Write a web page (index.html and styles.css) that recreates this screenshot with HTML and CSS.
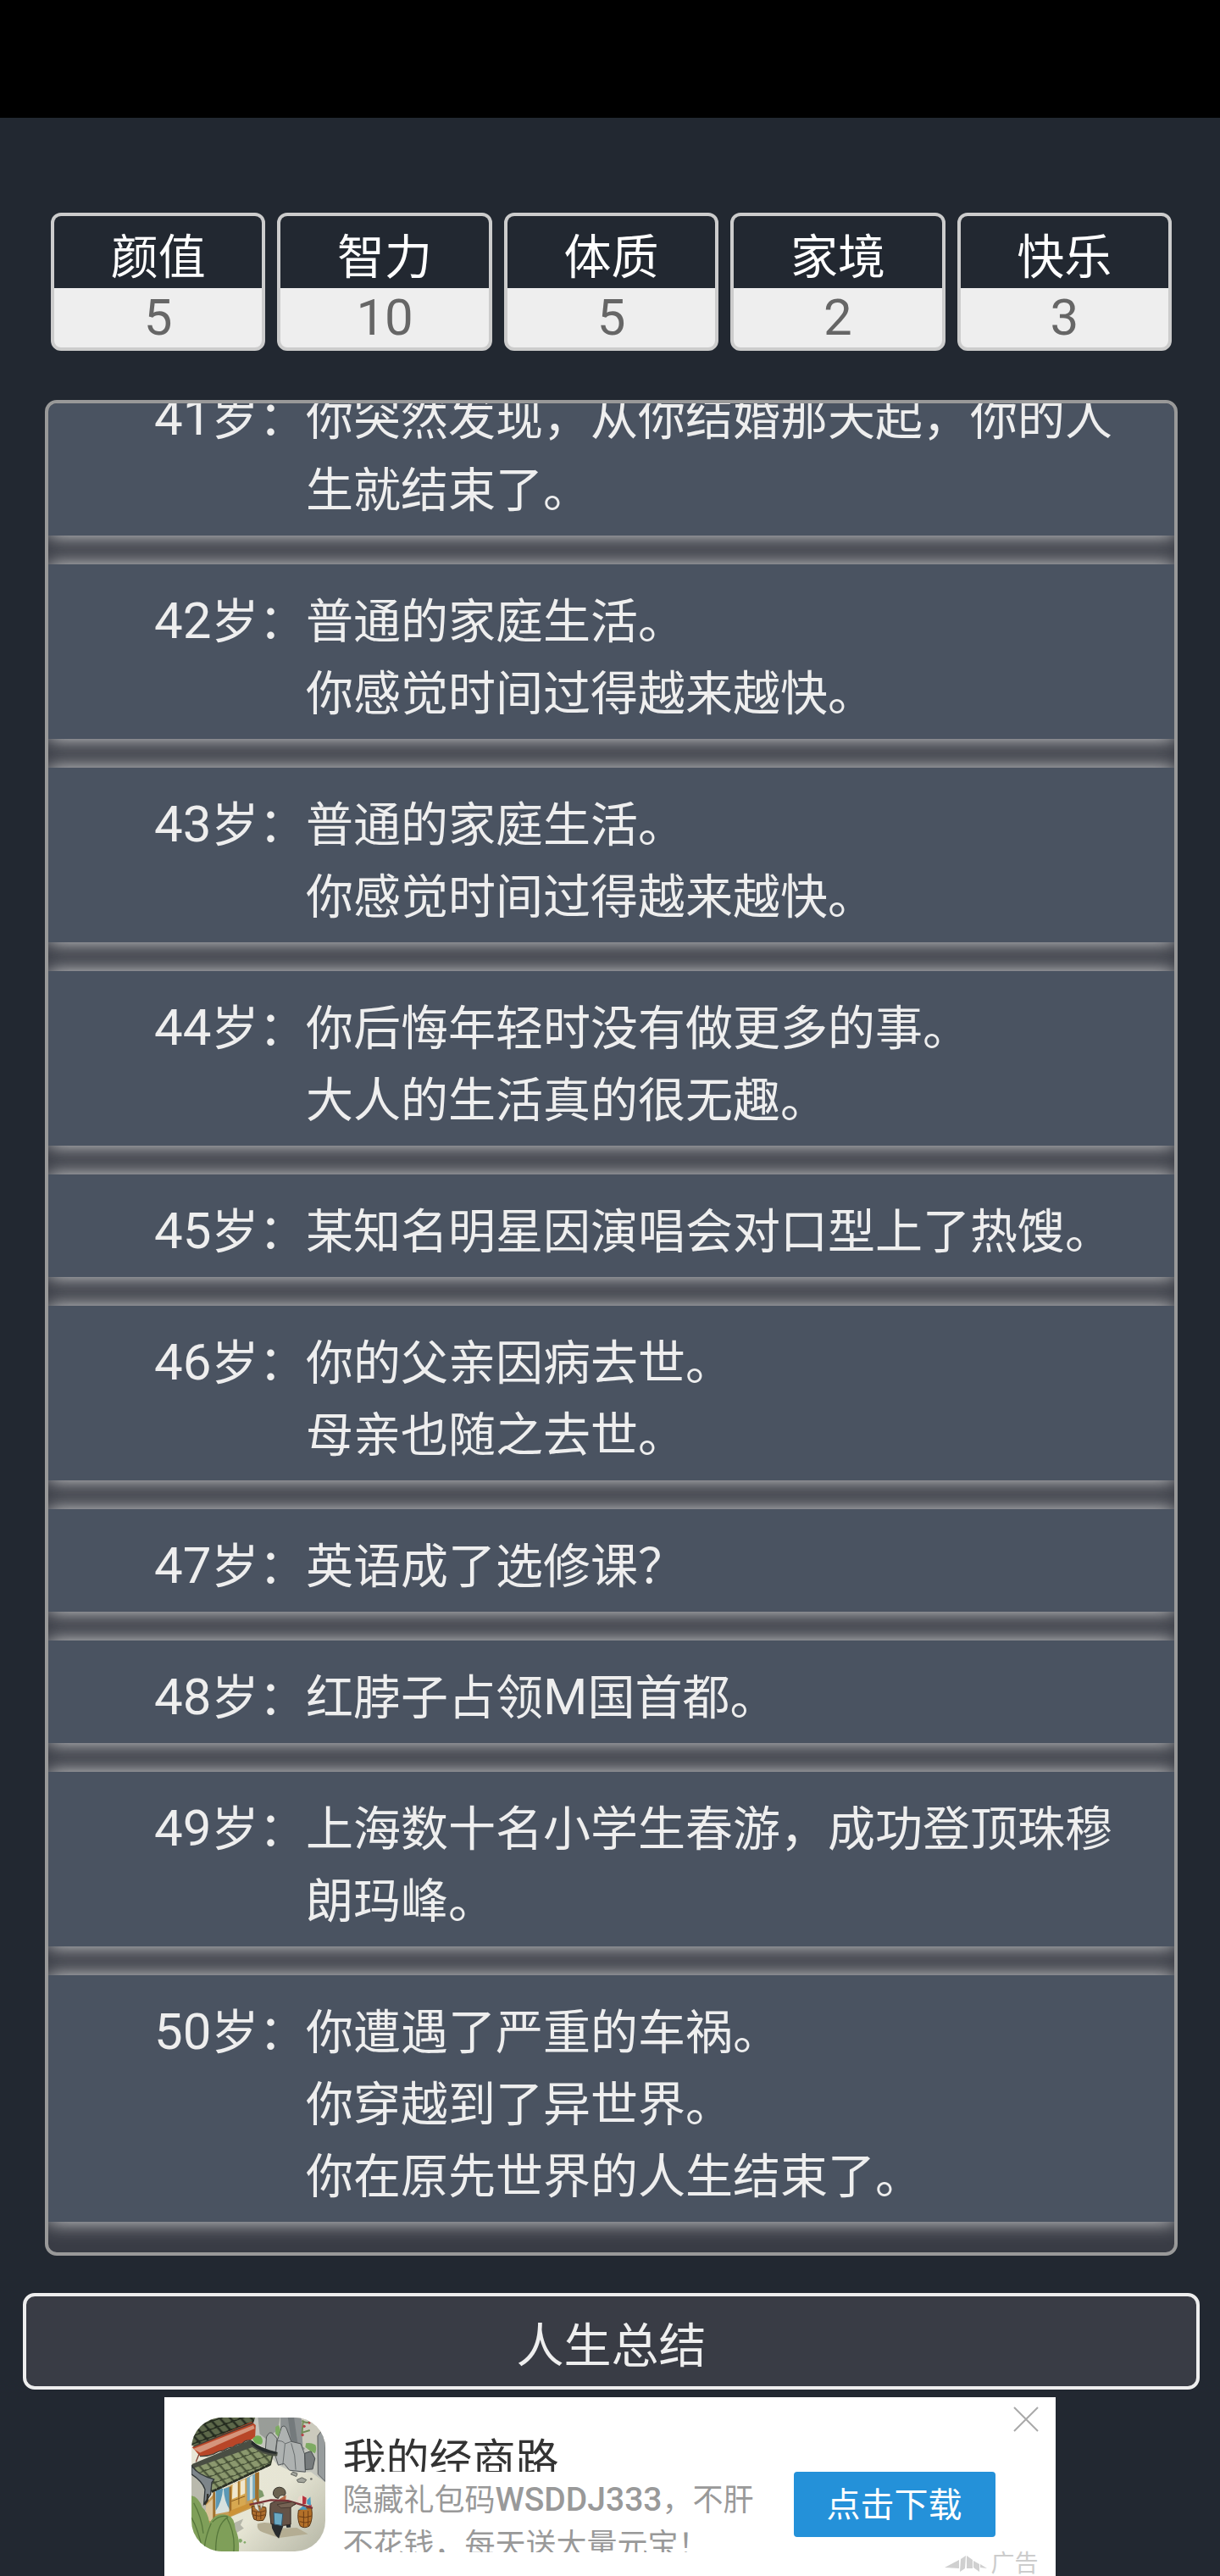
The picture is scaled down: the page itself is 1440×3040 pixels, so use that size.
FILE: index.html
```html
<!DOCTYPE html>
<html lang="zh-CN">
  <head>
    <meta charset="UTF-8" />
    <meta name="viewport" content="width=device-width, initial-scale=1.0" />
    <title>人生重开模拟器</title>
    <link rel="stylesheet" href="styles.css">
  </head>
  <body>
    <div class="status-bar"></div>

    <main class="game">
      <ul class="property">
        <li><span class="name">颜值</span><span class="value">5</span></li>
        <li><span class="name">智力</span><span class="value">10</span></li>
        <li><span class="name">体质</span><span class="value">5</span></li>
        <li><span class="name">家境</span><span class="value">2</span></li>
        <li><span class="name">快乐</span><span class="value">3</span></li>
      </ul>

      <ul class="trajectory">
        <li>
          <span class="age"><span class="latin">41</span>岁：</span>
          <p>你突然发现，从你结婚那天起，你的人生就结束了。</p>
        </li>
        <li>
          <span class="age"><span class="latin">42</span>岁：</span>
          <p>普通的家庭生活。<br>你感觉时间过得越来越快。</p>
        </li>
        <li>
          <span class="age"><span class="latin">43</span>岁：</span>
          <p>普通的家庭生活。<br>你感觉时间过得越来越快。</p>
        </li>
        <li>
          <span class="age"><span class="latin">44</span>岁：</span>
          <p>你后悔年轻时没有做更多的事。<br>大人的生活真的很无趣。</p>
        </li>
        <li>
          <span class="age"><span class="latin">45</span>岁：</span>
          <p>某知名明星因演唱会对口型上了热馊。</p>
        </li>
        <li>
          <span class="age"><span class="latin">46</span>岁：</span>
          <p>你的父亲因病去世。<br>母亲也随之去世。</p>
        </li>
        <li>
          <span class="age"><span class="latin">47</span>岁：</span>
          <p>英语成了选修课？</p>
        </li>
        <li>
          <span class="age"><span class="latin">48</span>岁：</span>
          <p>红脖子占领<span class="latin">M</span>国首都。</p>
        </li>
        <li>
          <span class="age"><span class="latin">49</span>岁：</span>
          <p>上海数十名小学生春游，成功登顶珠穆朗玛峰。</p>
        </li>
        <li>
          <span class="age"><span class="latin">50</span>岁：</span>
          <p>你遭遇了严重的车祸。<br>你穿越到了异世界。<br>你在原先世界的人生结束了。</p>
        </li>
      </ul>

      <button type="button" class="summary">人生总结</button>
    </main>

    <!-- 底部广告 -->
    <aside class="ad">
      <svg class="ad-icon" viewBox="76 69 475 475" aria-hidden="true">
        <defs>
          <linearGradient id="ground" x1="0" y1="0" x2="1" y2="1">
            <stop offset="0" stop-color="#e9e7d8" />
            <stop offset="0.6" stop-color="#e6e5d4" />
            <stop offset="1" stop-color="#b4b5a4" />
          </linearGradient>
          <pattern id="tiles" width="30" height="26" patternUnits="userSpaceOnUse" patternTransform="rotate(-20) skewX(22)">
            <rect width="30" height="26" fill="#6f7c55" />
            <path d="M4 0v22q10 7 20 0V0z" fill="#8b986e" />
            <path d="M0 0v21q4 5 8 2q9 6 18 0q3 1 4-2V0" fill="none" stroke="#3c4630" stroke-width="4" />
          </pattern>
          <pattern id="dark-tiles" width="30" height="26" patternUnits="userSpaceOnUse" patternTransform="rotate(-20) skewX(22)">
            <rect width="30" height="26" fill="#3d4632" />
            <path d="M5 0v20q10 6 20 0V0z" fill="#5d684a" />
            <path d="M0 0v21q15 9 30 0V0" fill="none" stroke="#20271c" stroke-width="5" />
          </pattern>
        </defs>
        <rect x="76" y="69" width="475" height="475" fill="url(#ground)" />
        <!-- 山石 -->
        <path d="M290 69H551V300L500 262L440 265L380 235L335 180L300 150z" fill="#c3c5bd" />
        <path d="M312 69h78l-8 44l-42 32l-22-18z" fill="#999d98" />
        <path d="M392 69h74l12 112l-46 22l-40-70z" fill="#8d9293" />
        <path d="M418 69h22l14 100l-20 10z" fill="#747a7c" />
        <path d="M466 69h85v96l-50 28l-30-20z" fill="#cbcabd" />
        <path d="M338 190l4-52q12-26 26-8l12 14l-6 46l-14 12z" fill="#aaaeac" stroke="#4e5151" stroke-width="3" />
        <path d="M374 206l6-54l16-50q12-8 18 8l16 44l34 8l14 38l2 62l-56-6l-20-24l-20 6z" fill="#aeb2b1" stroke="#535758" stroke-width="3" />
        <path d="M380 152q20-2 28 10l22-8M408 162l-8 76M430 160l12 44l4 50" fill="none" stroke="#686d6e" stroke-width="3" />
        <path d="M478 196l22-8l14 26l-8 38l-26 2z" fill="#777c7d" stroke="#44494a" stroke-width="3" />
        <path d="M524 134l12-16l15 8V296l-26-26z" fill="#979c9d" stroke="#55595a" stroke-width="3" />
        <path d="M374 102l12-6l6 18l-8 24l-10-12zM482 160q16-4 34 6q6 16-2 30q-18-8-34-22z" fill="#7eab63" />
        <path d="M292 146q12-20 30-10q10 14 4 26q-20 10-34-16z" fill="#73ae57" />
        <path d="M468 80q18 12 26 4M470 122l26-8M472 82l-4 48" fill="none" stroke="#728d59" stroke-width="6" />
        <circle cx="476" cy="100" r="5" fill="#b8424a" />
        <circle cx="494" cy="88" r="4" fill="#b8424a" />
        <circle cx="470" cy="131" r="5" fill="#b8424a" />
        <path d="M428 270l8-8l16 6l-4 10zM450 290l18-8l16 8l-8 10l-22-2z" fill="#a3a59c" stroke="#62655f" stroke-width="3" />
        <circle cx="501" cy="287" r="4" fill="#6e706a" />
        <!-- 房屋 -->
        <path d="M76 250l76 40l-24 110l-52-10z" fill="#b9b9ad" />
        <path d="M126 372l34-36l154-74v118L204 426l-70 20z" fill="#c69c56" />
        <path d="M128 380l28-28v90l-32-12z" fill="#dbc49a" />
        <path d="M160 330l52-16v88l-50 10z" fill="#d7e1de" />
        <path d="M162 328l26-8q-4 50-26 80zM190 322l22-8v82q-20-30-22-74z" fill="#5b98b5" />
        <path d="M218 308l50-20v92l-54 18z" fill="#d7a851" />
        <path d="M222 306l18-8v52l-20 8zM250 296l16-8v50l-16 8z" fill="#efe7cf" />
        <path d="M272 284l30-16v86l-28 12z" fill="#78a9be" />
        <path d="M283 280l10-6v84l-10 4z" fill="#d4e0dd" />
        <path d="M302 266l14-4v108l-14 6zM210 316l8-2v90l-8 4zM152 334l8-2v100l-8 4z" fill="#9e6e2c" />
        <path d="M214 400l54-22l36-14v14L204 424z" fill="#cc9237" />
        <path d="M244 294v84M218 366l48-18" stroke="#87591f" stroke-width="3" />
        <path d="M314 322l14 8l6 18l-18 8z" fill="#7e9a6a" />
        <!-- 屋顶 -->
        <path d="M76 69h226l-8 24L90 168H76z" fill="url(#dark-tiles)" />
        <path d="M78 174l212-90l14 12l-2 40l-16 14q-20-4-30 12q-18-2-32 12q-20-2-34 12q-20 2-34 12q-22 6-50 8L84 180z" fill="#b84628" />
        <path d="M82 180l214-84l4 12L106 194z" fill="#d5957c" />
        <path d="M82 172l212-84M106 206q26 2 50-8q14-10 34-12q14-10 34-12q14-12 32-12q10-14 30-12" fill="none" stroke="#403e37" stroke-width="4" />
        <path d="M104 196l-12 30" stroke="#7b4233" stroke-width="4" />
        <path d="M78 240l208-86l36 26l42 22l-8 34l-206 96z" fill="url(#tiles)" stroke="#353c2c" stroke-width="5" />
        <path d="M78 234l208-86q28 28 96 44l-2 14q-44 0-88-32L80 250z" fill="#494e43" />
        <path d="M290 150q28 30 90 42l-4 6q-54-2-88-34z" fill="#262c2c" />
        <path d="M76 240q24 34 80 48l-8 12l-4 42l-24 34l4-52q-10-30-48-54z" fill="#7d858a" stroke="#33393a" stroke-width="4" />
        <path d="M148 332l206-96" stroke="#2b3025" stroke-width="8" stroke-dasharray="18 3" />
        <path d="M134 340l-2 24l-10 14" fill="none" stroke="#30302a" stroke-width="7" />
        <!-- 草丛 -->
        <path d="M208 466l22-24l30-14l-10 22l12 12l-26 16z" fill="#b5b6a9" />
        <path d="M76 346q26 4 38 42q20 16 26 56q22-42 66-28q22 6 26 50q16 34 12 78H76z" fill="#7f9f59" />
        <path d="M84 372q28 50 34 108M76 424q24 40 40 120M146 444q-18 40-24 84M206 422q-44 26-44 122M202 426q30 54 24 118M150 440q24-26 54-20" fill="none" stroke="#57773c" stroke-width="4" />
        <circle cx="249" cy="506" r="7" fill="#84aa6b" />
        <circle cx="265" cy="512" r="4" fill="#84aa6b" />
        <!-- 挑夫 -->
        <path d="M310 446q26-10 60 2l14 14l66-2l40 22l-104 14l-56-20q-24-8-20-30z" fill="#b4ad93" />
        <path d="M290 384q26-6 50 4q4 30-10 46q-20 4-32-4q-10-20-8-46z" fill="#ad6e2f" stroke="#553313" stroke-width="3" />
        <path d="M294 364l12-6l12 46l-16-12zM318 372l14 2l-10 22z" fill="#e0ddcd" stroke="#6a6252" stroke-width="2" />
        <path d="M291 399q24 10 48 0M293 414q22 9 44 0M306 404v26M322 404v26" fill="none" stroke="#6c3d15" stroke-width="3" />
        <path d="M456 398q26-12 46-8q6 40-8 64q-16 10-32 0q-12-24-6-56z" fill="#b37029" stroke="#553313" stroke-width="3" />
        <path d="M458 420q22 8 44-2M460 438q20 8 38 0M474 402v54M490 400v54" fill="none" stroke="#6c3d15" stroke-width="3" />
        <circle cx="467" cy="360" r="14" fill="#ead8cb" />
        <path d="M470 346l14 8l-2 22l-12 2zM492 380l10-2v12l-12-2z" fill="#b6323e" />
        <path d="M486 362l12-12l2 32l-14-6zM456 396l18-14l14 14z" fill="#479ac0" />
        <path d="M360 446l42 8l-8 20l-8 24l-12-12l-12-24zM410 446l18-2v14l-14 2z" fill="#292c2e" />
        <path d="M356 374l26-12l34 4l30 10l-18 10v62l-26 4l-44-6q-6-38-2-72z" fill="#655347" stroke="#352a24" stroke-width="3" />
        <path d="M368 406l32 4l-4 42l-26-4z" fill="#6ba9c3" stroke="#31556a" stroke-width="3" />
        <path d="M388 358l24-14l-2 18l-14 4z" fill="#b96d49" />
        <path d="M366 342q-2-24 22-26q22 2 22 22l-4 8q-16-6-22 10q-12 0-18-14z" fill="#6b6250" stroke="#39352d" stroke-width="3" />
        <path d="M282 378l76-16l60 2l88 26" fill="none" stroke="#7b3438" stroke-width="7" />
        <path d="M380 378l54-10l12 6l-18 14l-34 2z" fill="#756253" stroke="#392c25" stroke-width="2" />
      </svg>

      <div class="ad-text">
        <h2>我的经商路</h2>
        <p>隐藏礼包码<b>WSDDJ333</b>，不肝不花钱，每天送大量元宝！</p>
      </div>

      <button type="button" class="download">点击下载</button>

      <button type="button" class="close" aria-label="关闭">
        <svg viewBox="0 0 30 30" aria-hidden="true">
          <path d="M1 1l28 28M29 1L1 29" fill="none" stroke="#a9a9a9" stroke-width="2" />
        </svg>
      </button>

      <div class="ad-mark">
        <svg viewBox="0 0 50 20" aria-hidden="true">
          <path d="M0 14L17 5v10zM19 4l6-4l-1 15l-6 4zM26 0l7 5v10h-7zM34 6l7 4v9l-7-5zM42 10l8 5l-8-1z" fill="#d0d0d0" />
        </svg>
        <span>广告</span>
      </div>
    </aside>
  </body>
</html>
```

FILE: styles.css
```css
* {
  box-sizing: border-box;
}
body {
  margin: 0;
  height: 100vh;
  display: flex;
  flex-direction: column;
  overflow: hidden;
  font-family: Roboto, "Noto Sans CJK SC", sans-serif;
  font-size: 56px;
  color: #eee;
  background-color: #222831;
}
ul {
  list-style: none;
  margin: 0;
  padding: 0;
}
p,
h2 {
  margin: 0;
}
button {
  font-family: inherit;
  cursor: pointer;
}
.status-bar {
  flex: none;
  height: 139px;
  background-color: #000;
}
.game {
  flex: 1;
  min-height: 0;
  display: flex;
  flex-direction: column;
  padding: 112px 24px 9px 27px;
}

/* 属性 */
.property {
  display: flex;
  gap: 14px;
  margin: 0 33px 58px;
}
.property li {
  flex: 1;
  display: flex;
  flex-direction: column;
  overflow: hidden;
  text-align: center;
  border: 4px solid #ccc;
  border-radius: 12px;
  background-color: #eee;
}
.property .name {
  padding-top: 13px;
  line-height: 72px;
  color: #fff;
  background-color: #222831;
}
.property .value {
  font-size: 60px;
  line-height: 70px;
  color: #666;
}

/* 人生经历 */
.trajectory {
  flex: 1;
  min-height: 0;
  display: flex;
  flex-direction: column;
  justify-content: flex-end;
  gap: 34px;
  margin: 0 26px 44px;
  padding-bottom: 36px;
  overflow: hidden;
  border: 4px solid #999;
  border-radius: 14px;
  background-color: #393c45;
}
.trajectory li {
  flex: none;
  display: flex;
  padding: 26px 59px 10px 125px;
  line-height: 85px;
  background-color: #4a5361;
  box-shadow: 0 0 22px #ddd;
}
.trajectory .age {
  flex: none;
  width: 179px;
  white-space: nowrap;
}
.latin {
  font-size: 60px;
  line-height: 1;
}
.summary {
  height: 114px;
  font-size: 56px;
  color: #eee;
  border: 4px solid #eee;
  border-radius: 14px;
  background-color: #393c45;
}

/* 广告 */
.ad {
  position: relative;
  flex: none;
  display: flex;
  align-items: flex-start;
  width: 73%;
  height: 211px;
  margin: 0 auto;
  padding: 24px 71px 0 32px;
  background-color: #fff;
}
.ad-icon {
  flex: none;
  width: 158px;
  height: 158px;
  border-radius: 36px;
}
.ad-text {
  flex: 1;
  margin: 16px 24px 0 20px;
}
.ad-text h2 {
  height: 48px;
  overflow: hidden;
  font-size: 51px;
  line-height: 70px;
  font-weight: 400;
  color: #333;
}
.ad-text p {
  height: 95px;
  padding-top: 8px;
  overflow: hidden;
  font-size: 36px;
  line-height: 53px;
  color: #999;
}
.ad-text b {
  font-size: 39px;
  line-height: 1;
  font-weight: 500;
}
.download {
  flex: none;
  width: 238px;
  height: 77px;
  margin-top: 64px;
  padding: 0 0 6px;
  font-size: 40px;
  color: #fff;
  border: none;
  border-radius: 4px;
  background-color: #2491d9;
}
.close {
  position: absolute;
  top: 11px;
  right: 20px;
  width: 30px;
  height: 30px;
  padding: 0;
  border: none;
  background: none;
}
.close svg {
  display: block;
}
.ad-mark {
  position: absolute;
  right: 20px;
  bottom: -2px;
  display: flex;
  align-items: center;
  gap: 5px;
  font-size: 28px;
  line-height: 32px;
  color: #ccc;
}
.ad-mark svg {
  width: 50px;
  height: 20px;
}
```
